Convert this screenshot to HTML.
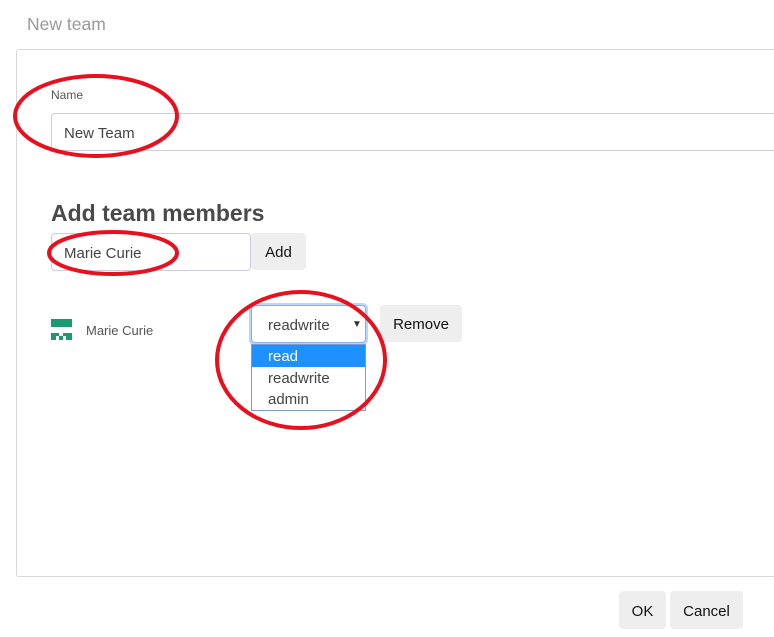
<!DOCTYPE html>
<html><head><meta charset="utf-8"><style>
*{box-sizing:border-box;margin:0;padding:0}
body{width:774px;height:637px;overflow:hidden;background:#fff;font-family:"Liberation Sans",sans-serif;position:relative;color:#333}
.a{position:absolute}
.btn{position:absolute;background:#eee;border-radius:4px;font-size:15px;color:#111;display:flex;align-items:center;justify-content:center;padding-top:2px}
.inp{position:absolute;border:1px solid #ccd;border-radius:4px;background:#fff;font-size:15px;color:#444;padding-left:12px;display:flex;align-items:center;padding-top:2px}
</style></head><body>
<div class="a" style="left:27px;top:14px;font-size:17.5px;color:#999">New team</div>
<div class="a" style="left:16px;top:49px;width:780px;height:528px;border:1px solid #d8d8d8;border-radius:3px"></div>
<div class="a" style="left:51px;top:88px;font-size:12px;color:#555">Name</div>
<div class="inp" style="left:51px;top:113px;width:740px;height:38px">New Team</div>
<div class="a" style="left:51px;top:200px;font-size:23px;font-weight:bold;color:#4a4a4a">Add team members</div>
<div class="inp" style="left:51px;top:233px;width:200px;height:38px">Marie Curie</div>
<div class="btn" style="left:251px;top:233px;width:55px;height:37px">Add</div>
<svg class="a" style="left:0;top:0" width="774" height="637">
<g fill="#1a9a70">
<rect x="51" y="319" width="21" height="8"/>
<rect x="51" y="333" width="5" height="7"/>
<rect x="56" y="333" width="3" height="3"/>
<rect x="59" y="336" width="4" height="4"/>
<rect x="63" y="333" width="3" height="3"/>
<rect x="66" y="333" width="6" height="7"/>
</g>
</svg>
<div class="a" style="left:86px;top:323px;font-size:13px;color:#555">Marie Curie</div>
<div class="a" style="left:249px;top:303px;width:119px;height:42px;border-radius:5px;background:#b8d6fb"></div>
<div class="inp" style="left:251px;top:305px;width:115px;height:38px;border-color:#88aee8;padding-left:16px">readwrite</div>
<div class="a" style="left:352px;top:319px;font-size:10px;color:#333">▼</div>
<div class="btn" style="left:380px;top:305px;width:82px;height:37px">Remove</div>
<div class="a" style="left:251px;top:344px;width:115px;height:67px;border:1px solid #7a9ad0;background:#fff;font-size:15px;color:#444">
<div style="background:#1e90ff;color:#fff;height:22px;padding-left:16px;line-height:23px">read</div>
<div style="height:22px;padding-left:16px;line-height:23px">readwrite</div>
<div style="height:22px;padding-left:16px;line-height:21px">admin</div>
</div>
<div class="btn" style="left:619px;top:591px;width:47px;height:38px">OK</div>
<div class="btn" style="left:670px;top:591px;width:73px;height:38px">Cancel</div>
<svg class="a" style="left:0;top:0" width="774" height="637">
<g fill="none" stroke="#e8101e" stroke-width="4">
<ellipse cx="96" cy="116" rx="81" ry="40"/>
<ellipse cx="113" cy="253" rx="64" ry="21"/>
<ellipse cx="301" cy="360" rx="84" ry="68"/>
</g>
</svg>
</body></html>
